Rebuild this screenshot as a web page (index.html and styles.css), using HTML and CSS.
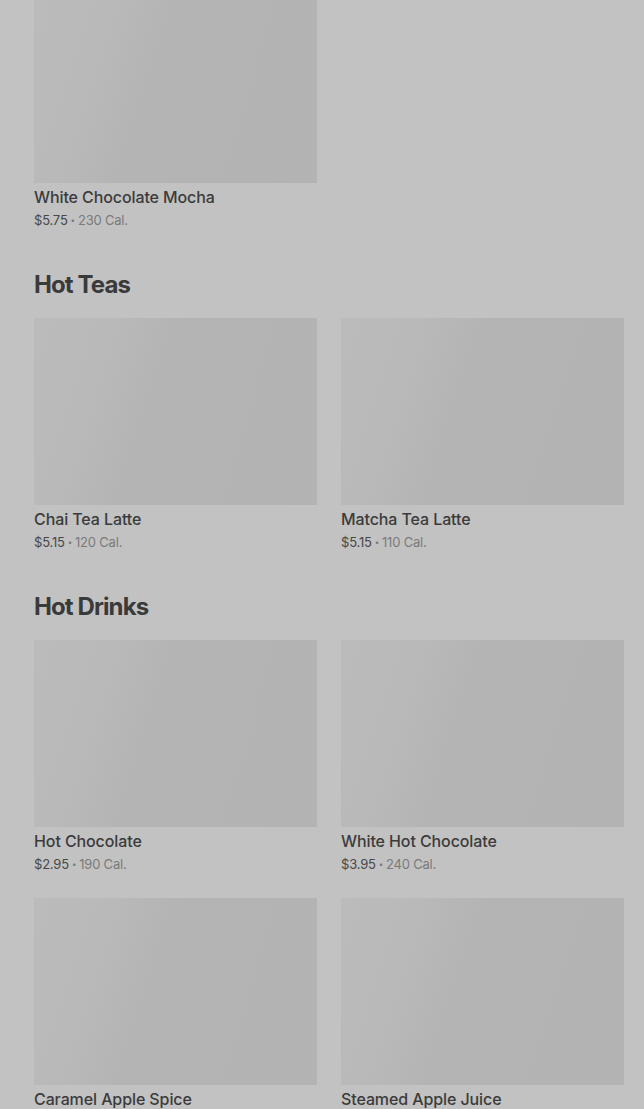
FILE: index.html
```html
<!DOCTYPE html>
<html lang="en">
<head>
<meta charset="utf-8">
<title>Menu</title>
<link rel="stylesheet" href="styles.css">
</head>
<body>
<main class="menu">
  <section class="section section-first">
    <div class="grid">
      <article class="card">
        <div class="thumb"></div>
        <h3 class="name">White Chocolate Mocha</h3>
        <p class="meta"><span class="price">$5.75</span><span class="dot">•</span><span class="cal">230 Cal.</span></p>
      </article>
    </div>
  </section>

  <section class="section">
    <h2 class="heading">Hot Teas</h2>
    <div class="grid">
      <article class="card">
        <div class="thumb"></div>
        <h3 class="name">Chai Tea Latte</h3>
        <p class="meta"><span class="price">$5.15</span><span class="dot">•</span><span class="cal">120 Cal.</span></p>
      </article>
      <article class="card">
        <div class="thumb"></div>
        <h3 class="name">Matcha Tea Latte</h3>
        <p class="meta"><span class="price">$5.15</span><span class="dot">•</span><span class="cal">110 Cal.</span></p>
      </article>
    </div>
  </section>

  <section class="section">
    <h2 class="heading">Hot Drinks</h2>
    <div class="grid">
      <article class="card">
        <div class="thumb"></div>
        <h3 class="name">Hot Chocolate</h3>
        <p class="meta"><span class="price">$2.95</span><span class="dot">•</span><span class="cal">190 Cal.</span></p>
      </article>
      <article class="card">
        <div class="thumb"></div>
        <h3 class="name">White Hot Chocolate</h3>
        <p class="meta"><span class="price">$3.95</span><span class="dot">•</span><span class="cal">240 Cal.</span></p>
      </article>
      <article class="card">
        <div class="thumb"></div>
        <h3 class="name">Caramel Apple Spice</h3>
        <p class="meta"><span class="price">$4.45</span><span class="dot">•</span><span class="cal">360 Cal.</span></p>
      </article>
      <article class="card">
        <div class="thumb"></div>
        <h3 class="name">Steamed Apple Juice</h3>
        <p class="meta"><span class="price">$3.95</span><span class="dot">•</span><span class="cal">170 Cal.</span></p>
      </article>
    </div>
  </section>
</main>
</body>
</html>
```

FILE: styles.css
```css
html, body {
  margin: 0;
  padding: 0;
  background: #c2c2c2;
}

body {
  font-family: Inter, "Noto Sans", "Liberation Sans", sans-serif;
  color: #3a3a3a;
  overflow: hidden;
}

.menu {
  margin-top: -4px;
  padding: 0 20px 40px 34px;
}

.section {
  margin-top: 39px;
}

.section-first {
  margin-top: 0;
}

.heading {
  margin: 0 0 17px;
  font-size: 24px;
  line-height: 32px;
  font-weight: 700;
  letter-spacing: -0.9px;
  color: #3a3a3a;
}

.grid {
  display: grid;
  grid-template-columns: 283px 283px;
  column-gap: 24px;
  row-gap: 24px;
}

.card {
  display: flex;
  flex-direction: column;
}

.thumb {
  height: 187px;
  background: linear-gradient(108deg, #bbbbbb 0%, #b9b9b9 24%, #b4b4b4 42%, #b3b3b3 100%);
}

.name {
  margin: 4px 0 0;
  font-size: 16px;
  line-height: 20px;
  font-weight: 500;
  letter-spacing: -0.1px;
  color: #3b3b3b;
}

.meta {
  margin: 3px 0 0;
  font-size: 13px;
  line-height: 20px;
  font-weight: 400;
  letter-spacing: -0.2px;
  display: flex;
  align-items: center;
}

.price {
  color: #484848;
}

.dot {
  color: #7a7a7a;
  font-size: 8px;
  margin: 0 3px;
}

.cal {
  color: #7a7a7a;
}
```
